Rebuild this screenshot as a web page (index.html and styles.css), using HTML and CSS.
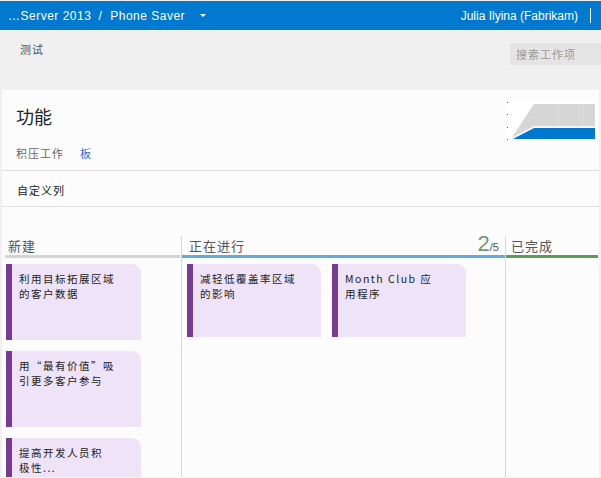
FILE: index.html
```html
<!DOCTYPE html>
<html lang="zh-CN">
<head>
<meta charset="utf-8">
<link rel="stylesheet" href="styles.css">
</head>
<body>
<div class="page">
  <div class="topbar">
    <div class="crumbs">
      <span>…Server 2013</span><span class="sep">/</span><span>Phone Saver</span>
      <svg class="caret" width="6" height="4" viewBox="0 0 6 4"><polygon points="0,0 6,0 3,3" fill="#fff"/></svg>
    </div>
    <div class="user">Julia Ilyina (Fabrikam)<span class="vbar"></span></div>
  </div>
  <div class="subbar">
    <div class="team">测试</div>
    <div class="search">搜索工作项</div>
  </div>
  <div class="panel">
    <div class="titlearea">
      <div class="titlecol">
        <h1 class="title">功能</h1>
        <div class="tabs"><span class="tab">积压工作</span><span class="tab active">板</span></div>
      </div>
      <svg class="chart" width="90" height="41" viewBox="0 0 90 41">
        <rect x="0" y="0" width="90" height="41" fill="#fff"/>
        <polygon points="5,39 28,4 89,4 89,39" fill="#d6d6d6"/>
        <line x1="52" y1="4" x2="52" y2="39" stroke="#dcdcdc" stroke-width="1"/>
        <line x1="77" y1="4" x2="77" y2="39" stroke="#dcdcdc" stroke-width="1"/>
        <polygon points="5,39 28,28 89,28 89,39" fill="#0078d0"/>
        <polyline points="4,39.5 28,27 89,27" fill="none" stroke="#fff" stroke-width="1.6"/>
        <rect x="1" y="2" width="1" height="1" fill="#555"/>
        <rect x="1" y="14" width="1" height="1" fill="#555"/>
        <rect x="1" y="27" width="1" height="1" fill="#555"/>
        <rect x="1" y="39" width="1" height="1" fill="#555"/>
      </svg>
    </div>
    <div class="toolbar">自定义列</div>
    <div class="board">
      <div class="col col-new">
        <div class="colhead"><span class="colname">新建</span></div>
        <div class="cards cards-stack">
          <div class="card tall">利用目标拓展区域<br>的客户数据</div>
          <div class="card tall">用“最有价值”吸<br>引更多客户参与</div>
          <div class="card tall">提高开发人员积<br>极性...</div>
        </div>
      </div>
      <div class="col col-active">
        <div class="colhead"><span class="colname">正在进行</span><span class="count"><span class="num">2</span><span class="lim">/5</span></span></div>
        <div class="cards cards-row">
          <div class="card short">减轻低覆盖率区域<br>的影响</div>
          <div class="card short">Month Club 应<br>用程序</div>
        </div>
      </div>
      <div class="col col-done">
        <div class="colhead"><span class="colname">已完成</span></div>
      </div>
    </div>
  </div>
</div>
</body>
</html>
```
FILE: styles.css
```css
html, body {
  margin: 0;
  padding: 0;
}
body {
  width: 601px;
  height: 478px;
  overflow: hidden;
  background: #f0f0f0;
  font-family: "Liberation Sans", "Noto Sans CJK SC", sans-serif;
}
.page {
  display: flex;
  flex-direction: column;
  height: 478px;
}
.topbar {
  margin-top: 1px;
  height: 29px;
  background: #0079cf;
  color: #fff;
  display: flex;
  align-items: center;
  justify-content: space-between;
  font-size: 12px;
  flex: none;
}
.crumbs {
  padding-left: 8px;
  display: flex;
  align-items: center;
  letter-spacing: 0.5px;
}
.sep {
  padding: 0 8px 0 7px;
}
.caret {
  margin-left: 15px;
  margin-top: 1px;
}
.user {
  display: flex;
  align-items: center;
  padding-right: 10px;
}
.vbar {
  width: 1px;
  height: 15px;
  background: #fff;
  margin-left: 12px;
}
.subbar {
  height: 60px;
  display: flex;
  align-items: flex-start;
  flex: none;
}
.team {
  margin-top: 11px;
  padding-left: 20px;
  font-size: 11px;
  line-height: 16px;
  height: 16px;
  color: #555;
  letter-spacing: 1px;
  font-family: "Noto Sans CJK SC", sans-serif;
}
.search {
  margin-left: auto;
  margin-top: 13px;
  width: 85px;
  height: 22px;
  line-height: 22px;
  padding-left: 6px;
  background: #e4e4e4;
  color: #999;
  font-size: 11px;
  letter-spacing: 1px;
  font-family: "Noto Sans CJK SC", sans-serif;
}
.panel {
  margin: 0 2px 0 2px;
  height: 387px;
  background: #fcfcfc;
  overflow: hidden;
  flex: none;
}
.titlearea {
  display: flex;
  justify-content: space-between;
  height: 80px;
  border-bottom: 1px solid #dedede;
  padding-left: 14px;
}
.title {
  margin: 14px 0 0 0;
  font-size: 18px;
  line-height: 24px;
  font-weight: normal;
  color: #222;
  font-family: "Noto Sans CJK SC", sans-serif;
}
.tabs {
  margin-top: 17px;
  line-height: 16px;
  font-size: 11px;
  letter-spacing: 1px;
  font-family: "Noto Sans CJK SC", sans-serif;
}
.tab {
  color: #666;
  margin-right: 16px;
}
.tab.active {
  color: #2b6fd0;
}
.chart {
  margin-top: 10px;
  margin-right: 3px;
}
.toolbar {
  height: 16px;
  line-height: 16px;
  padding: 11px 0 8px 15px;
  border-bottom: 1px solid #dedede;
  font-size: 11px;
  letter-spacing: 1px;
  color: #222;
  font-family: "Noto Sans CJK SC", sans-serif;
}
.board {
  display: flex;
  padding: 28px 0 0 3px;
  height: 400px;
}
.col {
  display: flex;
  flex-direction: column;
}
.col-new {
  width: 176px;
}
.col-active {
  width: 323px;
  border-left: 1px solid #d9d9d9;
}
.col-done {
  width: 92px;
  border-left: 1px solid #d9d9d9;
}
.colhead {
  height: 20px;
  line-height: 19px;
  display: flex;
  justify-content: space-between;
  align-items: center;
  font-size: 13px;
  color: #555;
  letter-spacing: 1px;
  font-family: "Noto Sans CJK SC", sans-serif;
}
.col-new .colhead {
  padding-left: 3px;
  border-bottom: 3px solid #d4d4d4;
  margin-right: 1px;
}
.col-active .colhead {
  padding-left: 7px;
  padding-right: 6px;
  border-bottom: 3px solid #62abdf;
}
.col-done .colhead {
  padding-left: 5px;
  border-bottom: 3px solid #5a9e55;
}
.count {
  font-family: "Liberation Sans", sans-serif;
  letter-spacing: 0;
  line-height: 18px;
}
.num {
  font-size: 22px;
  color: #6e9b73;
}
.lim {
  font-size: 11px;
  color: #555;
}
.cards {
  padding-top: 6px;
}
.cards-stack {
  display: flex;
  flex-direction: column;
  gap: 11px;
  padding-left: 1px;
}
.cards-row {
  display: flex;
  gap: 11px;
  padding-left: 5px;
  align-items: flex-start;
}
.card {
  box-sizing: border-box;
  background: #efe3f7;
  border-left: 6px solid #773b93;
  border-radius: 0 9px 0 0;
  padding: 7px 6px 0 7px;
  font-size: 10.5px;
  line-height: 15px;
  letter-spacing: 1.5px;
  color: #222;
  white-space: nowrap;
  flex: none;
  font-family: "Noto Sans CJK SC", sans-serif;
}
.card.tall {
  width: 135px;
  height: 76px;
}
.card.short {
  width: 134px;
  height: 73px;
}
```
